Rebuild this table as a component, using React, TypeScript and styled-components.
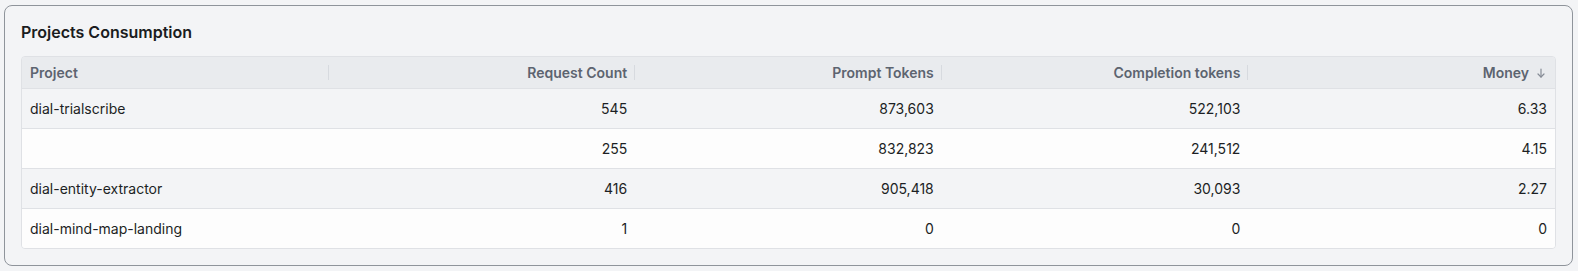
import React from "react";
import styled, { createGlobalStyle } from "styled-components";

const GlobalStyle = createGlobalStyle`
  html, body {
    margin: 0;
    padding: 0;
    background: #f3f4f6;
  }
  body {
    padding: 5px 5px 7px 4px;
    font-family: Inter, "Noto Sans", sans-serif;
    color: #1c1f24;
  }
`;

const Card = styled.section`
  border: 1px solid #8f949b;
  border-radius: 8px;
  background: #f3f4f6;
  padding: 16px 16px 16px 16px;
`;

const Title = styled.h2`
  margin: 0 0 14px 0;
  font-size: 16px;
  line-height: 20px;
  font-weight: 600;
  color: #1a1c20;
`;

const TableFrame = styled.div`
  border: 1px solid #dfe1e5;
  border-radius: 4px;
  overflow: hidden;
`;

const Table = styled.table`
  width: 100%;
  border-collapse: collapse;
  table-layout: fixed;
`;

const HeadCell = styled.th<{ $align: "left" | "right"; $last?: boolean }>`
  position: relative;
  height: 31px;
  padding: 0 8px;
  background: #e9ebee;
  border-bottom: 1px solid #dfe1e5;
  text-align: ${(p) => p.$align};
  font-size: 14px;
  font-weight: 600;
  color: #5d6470;
  white-space: nowrap;
  &::after {
    content: "";
    display: ${(p) => (p.$last ? "none" : "block")};
    position: absolute;
    right: 0;
    top: 8px;
    height: 15px;
    width: 1px;
    background: #d7dadf;
  }
`;

const SortLabel = styled.span`
  display: inline-flex;
  align-items: center;
  gap: 6px;
`;

const SortIcon = styled.svg`
  width: 12px;
  height: 12px;
  color: #868c96;
`;

const Row = styled.tr<{ $alt: boolean }>`
  background: ${(p) => (p.$alt ? "#fdfdfd" : "#f3f4f6")};
  &:not(:last-child) td {
    border-bottom: 1px solid #dfe1e5;
  }
`;

const Cell = styled.td<{ $align: "left" | "right" }>`
  height: 39px;
  padding: 0 8px;
  text-align: ${(p) => p.$align};
  font-size: 14px;
  color: #1c1f24;
  white-space: nowrap;
`;

type RowData = {
  project: string;
  requests: string;
  prompt: string;
  completion: string;
  money: string;
};

const rows: RowData[] = [
  { project: "dial-trialscribe", requests: "545", prompt: "873,603", completion: "522,103", money: "6.33" },
  { project: "", requests: "255", prompt: "832,823", completion: "241,512", money: "4.15" },
  { project: "dial-entity-extractor", requests: "416", prompt: "905,418", completion: "30,093", money: "2.27" },
  { project: "dial-mind-map-landing", requests: "1", prompt: "0", completion: "0", money: "0" },
];

export default function App() {
  return (
    <>
      <GlobalStyle />
      <Card>
        <Title>Projects Consumption</Title>
        <TableFrame>
          <Table>
            <thead>
              <tr>
                <HeadCell $align="left">Project</HeadCell>
                <HeadCell $align="right">Request Count</HeadCell>
                <HeadCell $align="right">Prompt Tokens</HeadCell>
                <HeadCell $align="right">Completion tokens</HeadCell>
                <HeadCell $align="right" $last>
                  <SortLabel>
                    Money
                    <SortIcon viewBox="0 0 12 12" fill="none" stroke="currentColor" strokeWidth="1.2" strokeLinecap="round" strokeLinejoin="round">
                      <path d="M6 2v8" />
                      <path d="M3 7l3 3 3-3" />
                    </SortIcon>
                  </SortLabel>
                </HeadCell>
              </tr>
            </thead>
            <tbody>
              {rows.map((r, i) => (
                <Row key={i} $alt={i % 2 === 1}>
                  <Cell $align="left">{r.project}</Cell>
                  <Cell $align="right">{r.requests}</Cell>
                  <Cell $align="right">{r.prompt}</Cell>
                  <Cell $align="right">{r.completion}</Cell>
                  <Cell $align="right">{r.money}</Cell>
                </Row>
              ))}
            </tbody>
          </Table>
        </TableFrame>
      </Card>
    </>
  );
}
